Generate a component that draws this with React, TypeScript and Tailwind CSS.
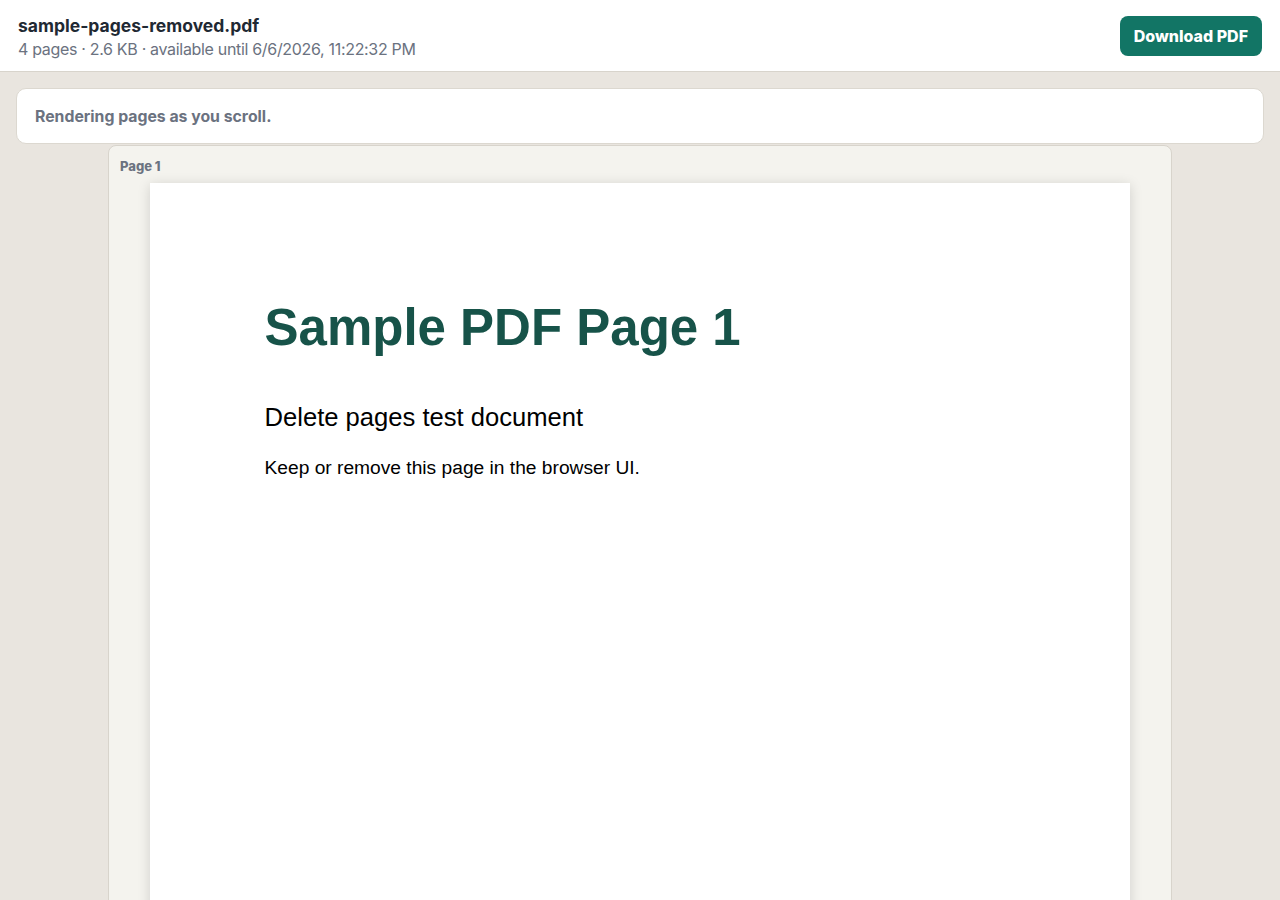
export default function App() {
  return (
    <div className="min-h-screen bg-[#e9e5df] font-['Inter',sans-serif] h-[900px] overflow-hidden">
      <header className="h-[72px] bg-white border-b border-[#d8d4cc] flex items-center justify-between pl-[18px] pr-[18px]">
        <div className="flex flex-col pt-[3px]">
          <div className="text-[17.5px] leading-[24px] font-bold text-[#1f2933] translate-y-[1px]">sample-pages-removed.pdf</div>
          <div className="text-[16px] leading-[24px] text-[#6b7280] tracking-[-0.32px]">4 pages · 2.6 KB · available until 6/6/2026, 11:22:32 PM</div>
        </div>
        <button className="h-[40px] px-[14px] rounded-[8px] bg-[#127565] text-white text-[16px] font-extrabold">Download PDF</button>
      </header>
      <main className="px-4 pt-4 flex flex-col items-center">
        <div className="w-full h-[56px] bg-white border border-[#dcd8d0] rounded-[10px] flex items-center px-[18px] pt-[2px]">
          <span className="text-[15.8px] font-bold text-[#6b7280]">Rendering pages as you scroll.</span>
        </div>
        <div className="mt-[1px] w-[1064px] h-[800px] bg-[#f4f3ee] border border-[#d8d4cc] rounded-t-[8px] pl-[11px] pr-[12px] pt-[12px]">
          <div className="text-[13px] leading-[16px] font-extrabold text-[#6b7280]">Page 1</div>
          <div className="mx-auto mt-[9px] w-[980px] h-[800px] bg-white shadow-[0_2px_12px_rgba(0,0,0,0.15)] font-['Liberation_Sans',Arial,sans-serif] pl-[115px] pt-[115px]">
            <div className="text-[51px] leading-[60px] font-bold text-[#175349]">Sample PDF Page 1</div>
            <div className="mt-[44px] text-[25.6px] leading-[30px] text-black">Delete pages test document</div>
            <div className="mt-[24px] text-[19.2px] leading-[24px] text-black">Keep or remove this page in the browser UI.</div>
          </div>
        </div>
      </main>
    </div>
  );
}
